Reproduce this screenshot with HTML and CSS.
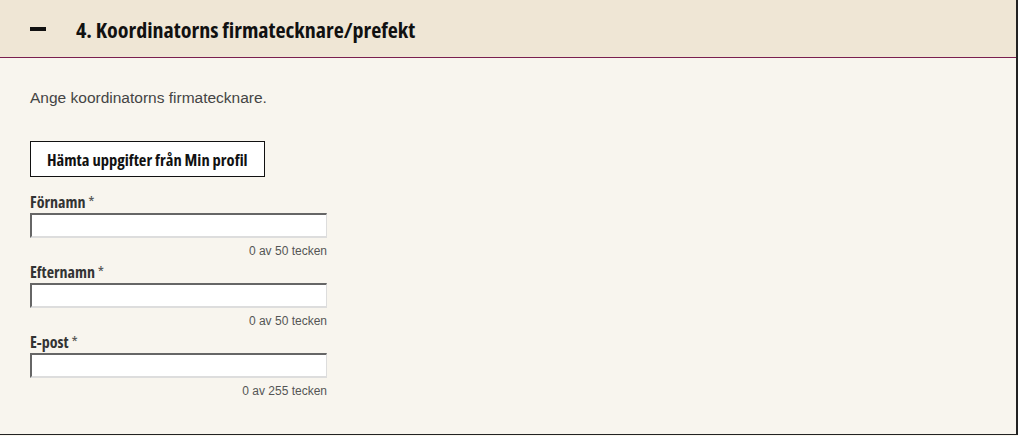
FILE: index.html
```html
<!DOCTYPE html>
<html lang="sv">
<head>
    <meta charset="UTF-8">
    <meta name="viewport" content="width=device-width, initial-scale=1.0">
    <title>Koordinatorns firmatecknare</title>
    <link rel="stylesheet" href="styles.css">
</head>
<body>

    <section class="panel">
        <!-- Rubrik -->
        <header class="panel-head">
            <span class="toggle"></span>
            <h2>4. Koordinatorns firmatecknare/prefekt</h2>
        </header>

        <div class="panel-body">
            <p class="intro">Ange koordinatorns firmatecknare.</p>

            <button class="fetch">Hämta uppgifter från Min profil</button>

            <div class="field">
                <label for="fornamn">Förnamn <span class="req">*</span></label>
                <input type="text" id="fornamn">
                <span class="count">0 av 50 tecken</span>
            </div>

            <div class="field">
                <label for="efternamn">Efternamn <span class="req">*</span></label>
                <input type="text" id="efternamn">
                <span class="count">0 av 50 tecken</span>
            </div>

            <div class="field">
                <label for="epost">E-post <span class="req">*</span></label>
                <input type="text" id="epost">
                <span class="count">0 av 255 tecken</span>
            </div>
        </div>
    </section>

</body>
</html>
```

FILE: styles.css
```css
body {
    margin: 0;
    background-color: #f8f5ee;
    font-family: "Liberation Sans", Arial, sans-serif;
    color: #333;
}

.panel {
    border-right: 2px solid #222;
    border-bottom: 1px solid #222;
    height: 435px;
    box-sizing: border-box;
}

.panel-head {
    display: flex;
    align-items: center;
    height: 57px;
    background-color: #efe6d5;
    border-bottom: 1px solid #7a1f4f;
    padding-left: 30px;
}

.toggle {
    width: 16px;
    height: 4px;
    background: #111;
    margin-right: 30px;
}

.panel-head h2,
.fetch,
.field label {
    font-family: "Open Sans", "DejaVu Sans Condensed", sans-serif;
    font-stretch: 75%;
}

.panel-head h2 {
    margin: 0;
    font-weight: bold;
    font-size: 22px;
    color: #111;
}

.panel-body {
    padding: 30px 30px 0 30px;
}

.intro {
    margin: 0 0 33px 0;
    font-size: 15.5px;
    line-height: 20px;
    color: #444;
}

.fetch {
    display: block;
    padding: 0 16px;
    height: 36px;
    background: white;
    border: 1px solid #111;
    font-weight: bold;
    font-size: 16.5px;
    color: #111;
    margin-bottom: 16px;
}

.field {
    width: 297px;
    display: flex;
    flex-direction: column;
    margin-bottom: 5px;
}

.field label {
    font-weight: bold;
    font-size: 16px;
    color: #333;
    line-height: 19px;
}

.req {
    font-weight: normal;
    color: #555;
}

.field input {
    height: 25px;
    box-sizing: border-box;
    margin-top: 1px;
    border-style: solid;
    border-width: 2px 1px 2px 2px;
    border-color: #666 #ddd #ddd #666;
    background: white;
}

.count {
    align-self: flex-end;
    font-size: 12px;
    color: #555;
    margin-top: 6px;
    line-height: 14px;
}
```
